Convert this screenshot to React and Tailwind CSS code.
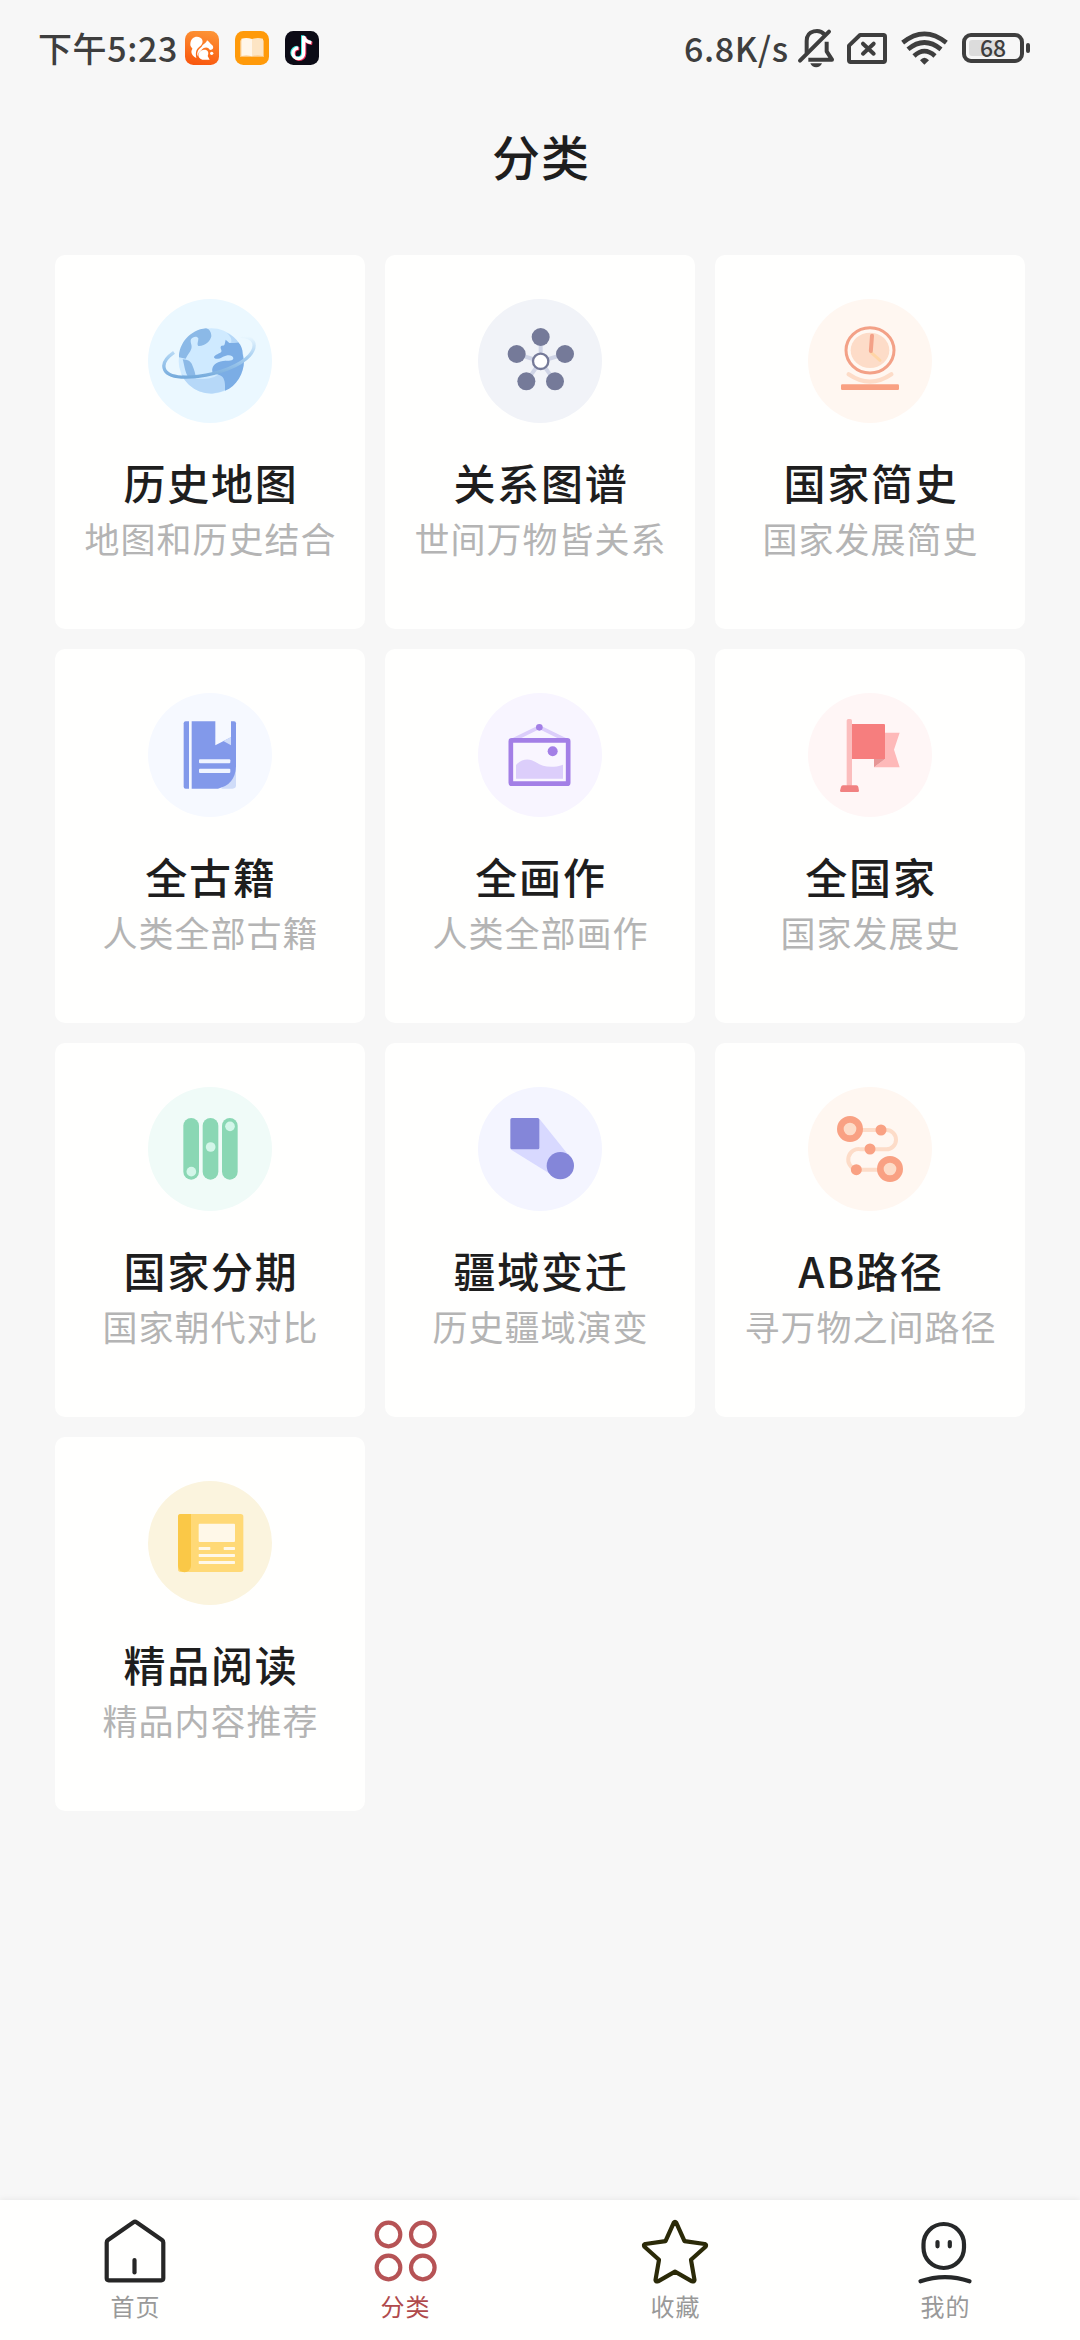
const fontStack = "font-['Noto_Sans_CJK_SC','Noto_Sans',sans-serif]";

function GlobeIcon() {
  return (
    <>
      <circle cx="190" cy="186" r="98" fill="#cfeaff" />
      <path d="M100 226Q185 260 229 212L229 226Q228 245 231 274A98 98 0 0 1 100 226Z" fill="#b6d8f8" />
      <path
        d="M174 88C186 90 190 103 190 112C188 125 172 142 151 141C146 137 151 128 151 118C148 110 134 112 129 121C125 130 134 139 130 149C127 160 118 166 113 179L93 175C92 135 126 92 174 88Z"
        fill="#8bb9e7"
      />
      <path d="M104 181C120 182 129 187 133 199C139 213 143 225 143 238L122 236C110 220 109 196 104 181Z" fill="#8bb9e7" />
      <path
        d="M233 122L244 132L271 130C280 140 284 152 284 164L288 186C288 222 266 262 231 275C231 258 231 236 220 231C209 223 195 227 193 218C190 202 204 188 225 186C243 184 256 187 256 177C253 165 236 168 225 173C211 182 198 181 198 174C200 166 216 164 220 158C222 152 215 148 219 142C225 138 228 142 230 136Z"
        fill="#7bade5"
      />
      <path d="M236 101Q253 115 250 132L271 130Q261 113 236 101Z" fill="#b6d8f8" />
      <defs>
        <linearGradient id="orbit" x1="0" y1="1" x2="0" y2="0">
          <stop offset="0" stopColor="#76abdc" />
          <stop offset="0.5" stopColor="#a9d0f1" />
          <stop offset="1" stopColor="#ebf8ff" />
        </linearGradient>
      </defs>
      <path
        d="M78 160C56 175 42 194 50 212C62 236 105 237 150 232C214 224 277 200 304 170C331 138 318 112 278 112"
        fill="none"
        stroke="url(#orbit)"
        strokeWidth="10"
      />
    </>
  );
}

function GraphIcon() {
  const nodes = [[188, 114], [116, 165], [261, 165], [145, 247], [231, 247]];
  return (
    <>
      {nodes.map(([x, y]) => (
        <line key={`l${x}`} x1="188" y1="187" x2={x} y2={y} stroke="#cfd4e6" strokeWidth="12" />
      ))}
      {nodes.map(([x, y]) => (
        <circle key={`c${x}`} cx={x} cy={y} r="27" fill="#757a99" />
      ))}
      <circle cx="188" cy="187" r="23" fill="#fff" stroke="#757a99" strokeWidth="7" />
    </>
  );
}

function ClockIcon() {
  return (
    <>
      <path d="M122 226Q186 270 250 226" fill="none" stroke="#fddcc8" strokeWidth="13" strokeLinecap="round" />
      <ellipse cx="186" cy="154" rx="72" ry="68" fill="#fff8f2" stroke="#f3a187" strokeWidth="9" />
      <ellipse cx="186" cy="154" rx="58" ry="53" fill="#fddcc8" />
      <path d="M189 160L216 184" stroke="#ffd5a6" strokeWidth="9" strokeLinecap="round" />
      <path d="M192 110L188.500 156" stroke="#f3a187" strokeWidth="12" strokeLinecap="round" />
      <rect x="99" y="256" width="174" height="17" rx="4" fill="#f9a183" />
    </>
  );
}

function BookIcon() {
  return (
    <>
      <path d="M220 287H254Q264 287 264 277V220Z" fill="#cfdcf9" />
      <path d="M113 85H123V287H113Q107 287 107 281V91Q107 85 113 85Z" fill="#8299ea" />
      <path d="M131 85H258Q264 85 264 91V220Q262 275 210 287H131Z" fill="#8299ea" />
      <path d="M202 84H249V133L202 157Z" fill="#f6f9ff" />
      <path d="M226 144L249 132V157Z" fill="#cfdcf9" />
      <rect x="153" y="199" width="94" height="12" rx="3" fill="#f0f5ff" />
      <rect x="153" y="227" width="94" height="13" rx="3" fill="#f0f5ff" />
    </>
  );
}

function PaintingIcon() {
  return (
    <>
      <path d="M105 141L184 102L263 141" fill="none" stroke="#dccefb" strokeWidth="11" />
      <circle cx="184" cy="103" r="10" fill="#a37fe6" />
      <rect x="98.500" y="142" width="172" height="130" rx="3" fill="#f9f6ff" stroke="#a37fe6" strokeWidth="14" />
      <circle cx="224" cy="175" r="15" fill="#a37fe6" />
      <path d="M114 216C132 196 155 195 174 208C196 223 224 226 255 215V257H114Z" fill="#dccefb" />
    </>
  );
}

function FlagIcon() {
  return (
    <>
      <rect x="116" y="78" width="16" height="202" rx="5" fill="#fbbdbd" />
      <path d="M231 119H275L258 170L275 223H198L231 198Z" fill="#feb9b9" />
      <path d="M198 198H231L198 223Z" fill="#e69696" />
      <path d="M132 93H228Q231 93 231 96V198H132Z" fill="#f67e7e" />
      <path d="M105 277H145Q150 277 151 282L153 293Q153 297 149 297H100Q96 297 96 293L99 282Q100 277 105 277Z" fill="#f18181" />
    </>
  );
}

function PeriodIcon() {
  return (
    <>
      <rect x="106" y="93" width="47" height="185" rx="23.500" fill="#8ad7b4" />
      <rect x="164" y="93" width="47" height="185" rx="23.500" fill="#8ad7b4" />
      <rect x="222" y="93" width="47" height="185" rx="23.500" fill="#8ad7b4" />
      <circle cx="130" cy="254" r="14.500" fill="#d3f6e9" />
      <circle cx="188" cy="180" r="14.500" fill="#d3f6e9" />
      <circle cx="246" cy="118" r="14.500" fill="#d3f6e9" />
    </>
  );
}

function TerritoryIcon() {
  return (
    <>
      <path d="M184 95L272 205L218 262L97 187Z" fill="#d8d9ff" />
      <rect x="97" y="93" width="87" height="94" rx="5" fill="#8486d9" />
      <circle cx="247" cy="236" r="41" fill="#8486d9" />
    </>
  );
}

function RouteIcon() {
  return (
    <>
      <path
        d="M126 129H235A29 29 0 0 1 235 187H159A30.500 30.500 0 0 0 145 248H246"
        fill="none"
        stroke="#fddcc8"
        strokeWidth="12"
      />
      <circle cx="126" cy="126" r="29" fill="#fddcc8" stroke="#f9a183" strokeWidth="20" />
      <circle cx="246" cy="246" r="29" fill="#fddcc8" stroke="#f9a183" strokeWidth="20" />
      <circle cx="219" cy="129" r="16.500" fill="#f9a183" />
      <circle cx="186" cy="186" r="16.500" fill="#f9a183" />
      <circle cx="145" cy="248" r="16.500" fill="#f9a183" />
    </>
  );
}

function ReadingIcon() {
  return (
    <>
      <rect x="90" y="99" width="196" height="174" rx="8" fill="#ffd976" />
      <path d="M98 99H129V254A19.500 19.500 0 0 1 90 254V107Q90 99 98 99Z" fill="#fac847" />
      <rect x="152" y="128" width="109" height="55" rx="3" fill="#fff8e8" />
      <rect x="152" y="198" width="35" height="9" rx="2" fill="#fff8e8" />
      <rect x="227" y="198" width="34" height="9" rx="2" fill="#fff8e8" />
      <rect x="152" y="219" width="109" height="9" rx="2" fill="#fff8e8" />
      <rect x="152" y="240" width="109" height="9" rx="2" fill="#fff8e8" />
    </>
  );
}

const categories = [
  { title: '历史地图', desc: '地图和历史结合', bg: 'bg-[#ebf8ff]', Icon: GlobeIcon },
  { title: '关系图谱', desc: '世间万物皆关系', bg: 'bg-[#f1f3f8]', Icon: GraphIcon },
  { title: '国家简史', desc: '国家发展简史', bg: 'bg-[#fff7f1]', Icon: ClockIcon },
  { title: '全古籍', desc: '人类全部古籍', bg: 'bg-[#f6f9ff]', Icon: BookIcon },
  { title: '全画作', desc: '人类全部画作', bg: 'bg-[#f8f5ff]', Icon: PaintingIcon },
  { title: '全国家', desc: '国家发展史', bg: 'bg-[#fff6f6]', Icon: FlagIcon },
  { title: '国家分期', desc: '国家朝代对比', bg: 'bg-[#f0fbf8]', Icon: PeriodIcon },
  { title: '疆域变迁', desc: '历史疆域演变', bg: 'bg-[#f4f5ff]', Icon: TerritoryIcon },
  { title: 'AB路径', desc: '寻万物之间路径', bg: 'bg-[#fff7f1]', Icon: RouteIcon },
  { title: '精品阅读', desc: '精品内容推荐', bg: 'bg-[#fbf4de]', Icon: ReadingIcon },
];

function CategoryCard({ title, desc, bg, Icon }) {
  return (
    <div className="h-[374px] rounded-[10px] bg-[#fffffe] pt-11 flex flex-col items-center whitespace-nowrap">
      <div className={`size-[124px] rounded-full ${bg}`}>
        <svg viewBox="0 0 372 372" className="size-full">
          <Icon />
        </svg>
      </div>
      <h2 className="mt-[29px] pl-0.5 h-[60px] leading-[60px] text-[42px] font-medium tracking-[1.8px] text-[#1e1e1e]">{title}</h2>
      <p className="mt-px pl-px h-[50px] leading-[50px] text-[35px] tracking-[1px] text-[#b4b4b4]">{desc}</p>
    </div>
  );
}

function StatusBar() {
  return (
    <div className="h-24 pl-[38px] pr-[50px] flex items-center justify-between text-[#3e3e3e]">
      <div className="flex items-center">
        <span className="w-[147px] text-[34px] leading-none font-medium whitespace-nowrap tracking-[0.6px]">下午5:23</span>
        <div className="flex gap-4">
          <svg viewBox="0 0 102 102" className="size-[34px]">
            <defs>
              <linearGradient id="uc" x1="0.700" y1="0" x2="0.500" y2="1">
                <stop offset="0" stopColor="#fd9436" />
                <stop offset="1" stopColor="#f9590f" />
              </linearGradient>
            </defs>
            <rect width="102" height="102" rx="25" fill="url(#uc)" />
            <path d="M16 38C17 20 34 12 46 20C56 26 54 38 46 45C36 53 30 60 34 81C22 76 15 64 22 54C23 49 15 49 16 38Z" fill="#fff" />
            <path d="M50 47C55 38 64 37 66 28C72 31 75 38 82 43C87 48 85 57 75 57C68 46 58 48 50 56C44 62 38 66 38 76C34 64 40 54 50 47Z" fill="#fff" />
            <path d="M54 57C66 54 74 63 68 75L74 86H52C34 80 38 60 54 57Z" fill="#fff" />
            <circle cx="80" cy="67" r="5" fill="#fff" />
          </svg>
          <svg viewBox="0 0 102 102" className="size-[34px]">
            <rect width="102" height="102" rx="25" fill="#ff9a0a" />
            <path d="M15 28H87V78H15Z" fill="#fcc478" />
            <path d="M19 23Q36 19 51 24V76Q36 71 19 75Z" fill="#fff6ea" />
            <path d="M51 24Q66 19 84 23V75Q66 71 51 76Z" fill="#fde5c4" />
          </svg>
          <svg viewBox="0 0 102 102" className="size-[34px]">
            <rect width="102" height="102" rx="25" fill="#0c0b16" />
            <g fill="none" strokeWidth="10">
              <path d="M56 14V66A16 16 0 1 1 40 50M56 15Q60 31 79 34" stroke="#37e8e4" transform="translate(-3 -1)" />
              <path d="M56 14V66A16 16 0 1 1 40 50M56 15Q60 31 79 34" stroke="#f5325b" transform="translate(3 3)" />
              <path d="M56 14V66A16 16 0 1 1 40 50M56 15Q60 31 79 34" stroke="#fff" transform="translate(0 1)" />
            </g>
          </svg>
        </div>
      </div>

      <div className="flex items-center">
        <span className="w-[113px] text-[34px] leading-none font-medium whitespace-nowrap tracking-[0.6px]">6.8K/s</span>
        <svg viewBox="400 85 120 120" className="size-10" fill="none" stroke="currentColor">
          <path d="M429 160V124C429 90 468 88 482 104" strokeWidth="12" />
          <path d="M434 180H505L489 155V126" strokeWidth="12" strokeLinejoin="round" />
          <path d="M409 183L496 96" strokeWidth="12" strokeLinecap="round" />
          <path d="M440 191H475Q470 203 457.500 203Q445 203 440 191Z" fill="currentColor" stroke="none" />
        </svg>
        <svg viewBox="0 0 120 93" className="ml-[10px] w-10 h-[31px]" fill="none" stroke="currentColor">
          <path d="M39 6H109Q114 6 114 11V82Q114 87 109 87H11Q6 87 6 82V38Z" strokeWidth="12" strokeLinejoin="round" />
          <path d="M48 32L80 62M80 32L48 62" strokeWidth="12" strokeLinecap="round" />
        </svg>
        <svg viewBox="718 94 141 102" className="ml-[14px] w-[47px] h-[34px]" fill="none" stroke="currentColor" strokeWidth="14">
          <path d="M723 129Q788 76 854 129" />
          <path d="M739 149Q788 108 838 149" />
          <path d="M757 169Q788 140 820 169" />
          <path d="M775 182Q788 166 802 182L788 195Z" fill="currentColor" stroke="none" />
        </svg>
        <div className="ml-[14px] flex items-center gap-0.5">
          <div className="w-[62px] h-[30px] border-4 border-[#3e3e3e] rounded-[9px] p-[3px]">
            <div className="h-4 rounded-[3px] bg-linear-to-r from-[#dcdcdc] from-68% to-transparent to-68% flex items-center justify-center">
              <span className="pb-0.5 text-[23px] leading-none font-medium">68</span>
            </div>
          </div>
          <div className="w-1 h-2.5 rounded-[2px] bg-[#3e3e3e]" />
        </div>
      </div>
    </div>
  );
}

function HomeIcon() {
  return (
    <g stroke="#262626">
      <path d="M38.500 12.300Q40 11 41.500 12.300L67 30Q68.300 31 68.300 32.500V68.300Q68.300 70.300 66.300 70.300H13.700Q11.700 70.300 11.700 68.300V32.500Q11.700 31 13 30Z" />
      <path d="M39.500 50V62.500" />
    </g>
  );
}

function GridIcon() {
  return (
    <g stroke="#b65355">
      <circle cx="23.500" cy="24.500" r="11.800" />
      <circle cx="57.800" cy="24.500" r="11.800" />
      <circle cx="23.500" cy="57.500" r="11.800" />
      <circle cx="57.800" cy="57.500" r="11.800" />
    </g>
  );
}

function StarIcon() {
  return (
    <path
      d="M38.700 12.800Q40 11 41.300 12.800L49.500 31.200L69.700 34Q72 35 70.500 36.800L56 49.800L59.500 70Q59.300 72 57 71.300L40 61.700L23 71.300Q20.700 72 20.500 70L24 49.800L9.500 36.800Q8 35 10.300 34L30.500 31.200Z"
      stroke="#2b2a08"
    />
  );
}

function MineIcon() {
  return (
    <g stroke="#262829">
      <rect x="18.500" y="14" width="40.500" height="44" rx="20.200" />
      <path d="M32.500 32V36.300M44.800 32V36.300" />
      <path d="M15.500 71.300Q40 62.800 64.500 71.300" />
    </g>
  );
}

const tabs = [
  { label: '首页', Icon: HomeIcon },
  { label: '分类', Icon: GridIcon, active: true },
  { label: '收藏', Icon: StarIcon },
  { label: '我的', Icon: MineIcon },
];

function TabBar() {
  return (
    <nav className="h-[140px] pt-2.5 bg-[#fffffe] grid grid-cols-4 shadow-[0_-1px_6px_rgba(0,0,0,0.06)]">
      {tabs.map(({ label, Icon, active }) => (
        <div key={label} className="flex flex-col items-center">
          <svg viewBox="0 0 80 80" className="size-20" fill="none" strokeWidth="4.2" strokeLinecap="round" strokeLinejoin="round">
            <Icon />
          </svg>
          <span className={`-mt-0.5 pl-px h-9 leading-9 text-2xl tracking-[1px] ${active ? 'text-[#b04a4c]' : 'text-[#999999]'}`}>{label}</span>
        </div>
      ))}
    </nav>
  );
}

export default function App() {
  return (
    <div className={`w-[1080px] h-[2340px] bg-[#f7f7f7] flex flex-col overflow-hidden ${fontStack}`}>
      <StatusBar />
      <header className="h-[159px] pt-[23px] text-center">
        <h1 className="pl-0.5 text-[48px] leading-[72px] font-medium tracking-[1px] text-[#1e1e1e]">分类</h1>
      </header>
      <main className="flex-1 px-[55px]">
        <div className="grid grid-cols-3 gap-5">
          {categories.map((item) => (
            <CategoryCard key={item.title} {...item} />
          ))}
        </div>
      </main>
      <TabBar />
    </div>
  );
}
